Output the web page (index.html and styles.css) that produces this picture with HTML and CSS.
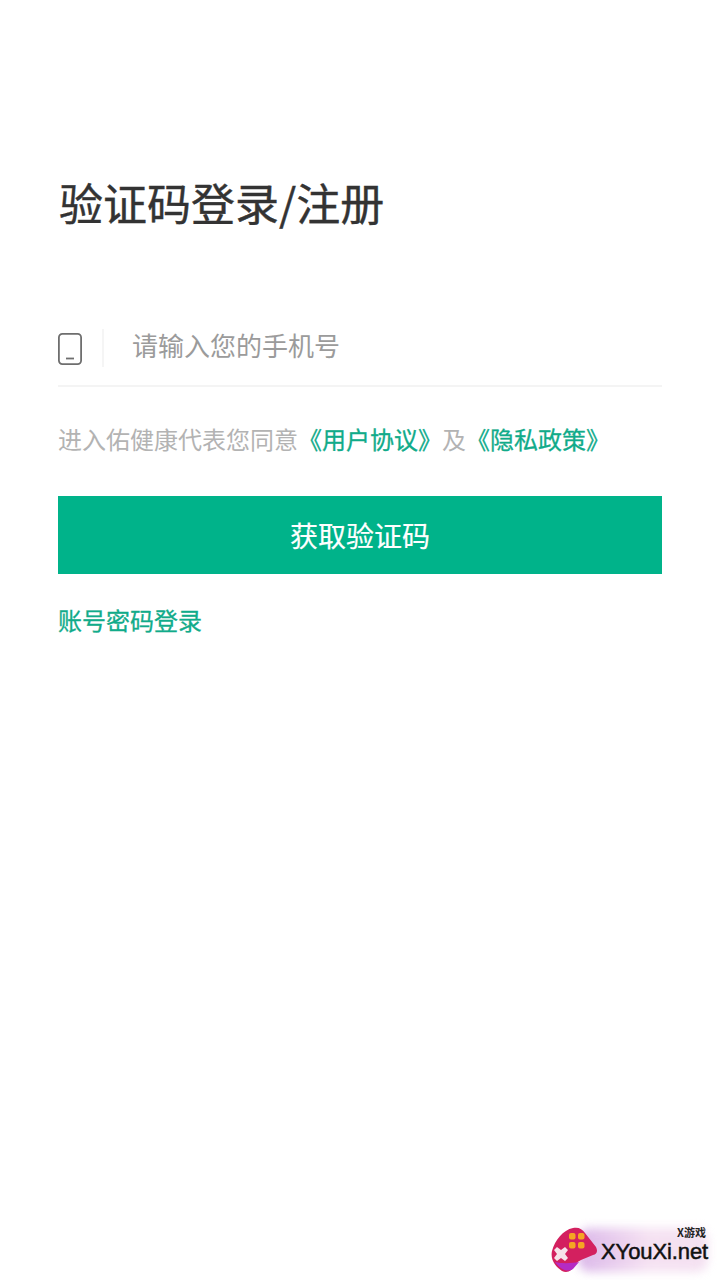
FILE: index.html
```html
<!DOCTYPE html>
<html lang="zh-CN">
<head>
    <meta charset="UTF-8">
    <meta name="viewport" content="width=device-width, initial-scale=1.0">
    <title>验证码登录/注册</title>
    <link rel="stylesheet" href="styles.css">
</head>
<body>
    <div class="container">
        <h1>验证码登录/注册</h1>

        <div class="phone-row">
            <svg class="phone-icon" width="24" height="32" viewBox="0 0 24 32" fill="none">
                <rect x="0.9" y="0.9" width="22.2" height="30.2" rx="3.5" stroke="#6e6e6e" stroke-width="1.8"/>
                <path d="M8 25.5h8" stroke="#6e6e6e" stroke-width="1.8"/>
            </svg>
            <span class="divider"></span>
            <span class="placeholder">请输入您的手机号</span>
        </div>

        <p class="agreement">进入佑健康代表您同意<a class="link">《用户协议》</a>及<a class="link">《隐私政策》</a></p>

        <button class="submit-btn" type="button">获取验证码</button>

        <a class="link password-login">账号密码登录</a>
    </div>

    <!-- watermark over the bottom corner -->
    <div class="watermark">
        <div class="watermark-glow"></div>
        <svg class="watermark-logo" width="62" height="50" viewBox="0 0 62 50">
            <path d="M2 25C5 14 13 4 23 2c6-1 9 1 12 5l11 14c2 4 1 7-3 8l-12 5c-4 2-6 4-8 8-3 4-7 5-11 3C6 41 0 34 2 25z" fill="#d3205f"/>
            <path d="M5 36c5 7 12 11 18 7 2-2 4-5 6-7-6 1-16 2-24 0z" fill="#b52bc4"/>
            <rect x="19" y="7" width="6.5" height="6.5" rx="2" fill="#f5a623"/>
            <rect x="28" y="7" width="6.5" height="6.5" rx="2" fill="#f5a623"/>
            <rect x="19" y="16" width="6.5" height="6.5" rx="2" fill="#f5a623"/>
            <rect x="28" y="16" width="6.5" height="6.5" rx="2" fill="#f5a623"/>
            <path d="M7 21l4 3 4-3 3 3-3 4 3 4-3 3-4-3-4 3-3-3 3-4-3-4z" fill="#f6e3ea"/>
        </svg>
        <span class="watermark-small">X游戏</span>
        <span class="watermark-name">XYouXi.net</span>
    </div>
</body>
</html>
```

FILE: styles.css
```css
* {
    margin: 0;
    padding: 0;
    box-sizing: border-box;
    font-family: 'Noto Sans CJK SC', 'Liberation Sans', sans-serif;
}

body {
    background-color: #fff;
    width: 720px;
    height: 1280px;
    overflow: hidden;
    position: relative;
}

.container {
    display: flex;
    flex-direction: column;
    padding: 172px 58px 0;
}

h1 {
    color: #333;
    font-size: 44px;
    font-weight: 400;
    line-height: 60px;
    padding-left: 1px;
    -webkit-text-stroke: 0.4px #333;
}

.phone-row {
    display: flex;
    align-items: center;
    height: 77px;
    margin-top: 78px;
    border-bottom: 2px solid #f4f4f4;
}

.phone-icon {
    flex-shrink: 0;
    margin-top: 2px;
}

.divider {
    width: 2px;
    height: 38px;
    background-color: #f5f5f5;
    margin: 1px 28px 0 20px;
}

.placeholder {
    color: #9b9b9b;
    font-size: 26px;
    line-height: 36px;
    margin-top: -5px;
}

.agreement {
    color: #b3b3b3;
    font-size: 24px;
    line-height: 34px;
    margin-top: 35px;
}

.link {
    color: #11ab8a;
    -webkit-text-stroke: 0.3px #11ab8a;
}

.submit-btn {
    height: 78px;
    margin-top: 40px;
    background-color: #00b38a;
    color: #fff;
    border: none;
    font-size: 28px;
    -webkit-text-stroke: 0.2px #fff;
}

.password-login {
    font-size: 24px;
    line-height: 34px;
    margin-top: 29px;
}

.watermark {
    position: absolute;
    left: 548px;
    bottom: 0;
    width: 172px;
    height: 60px;
}

.watermark-glow {
    position: absolute;
    left: 30px;
    top: 8px;
    width: 130px;
    height: 44px;
    border-radius: 12px;
    background: linear-gradient(90deg, #cfa0e2, #f3d9ee 55%, #f0d6ec);
    opacity: 0.75;
    filter: blur(5px);
}

.watermark-logo {
    position: absolute;
    left: 2px;
    top: 6px;
}

.watermark-small {
    position: absolute;
    right: 14px;
    top: 5px;
    font-size: 11px;
    line-height: 14px;
    font-weight: 700;
    color: #222;
}

.watermark-name {
    position: absolute;
    left: 53px;
    top: 18px;
    font-family: 'Liberation Sans', sans-serif;
    font-size: 22px;
    line-height: 28px;
    color: #111;
    letter-spacing: -0.1px;
    -webkit-text-stroke: 0.5px #111;
}
```
